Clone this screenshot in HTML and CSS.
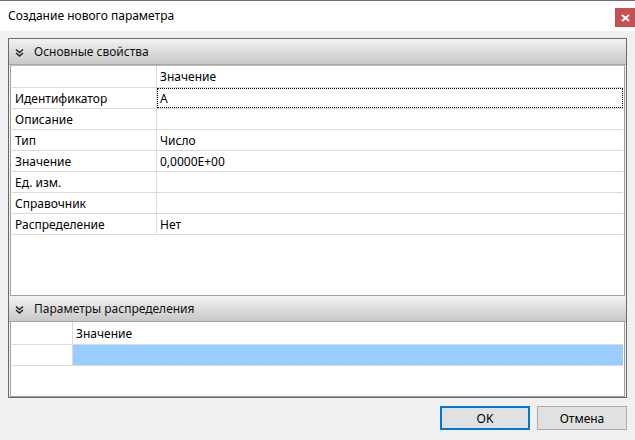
FILE: index.html
```html
<!DOCTYPE html>
<html>
<head>
<meta charset="utf-8">
<link rel="stylesheet" href="styles.css">
</head>
<body>
<div class="window">
  <div class="titlebar">
    <span class="title">Создание нового параметра</span>
    <div class="close">
      <svg width="9" height="8" viewBox="0 0 9 8"><path d="M1 1 L8 7 M8 1 L1 7" stroke="#fff" stroke-width="2" fill="none"/></svg>
    </div>
  </div>
  <div class="content">
    <div class="panel">
      <div class="section-head">
        <svg class="chev" width="9" height="9" viewBox="0 0 9 9"><path d="M1 1.5 L4.5 4.5 L8 1.5 M1 5 L4.5 8 L8 5" stroke="#222" stroke-width="1.5" fill="none"/></svg>
        <span>Основные свойства</span>
      </div>
      <div class="grid-wrap grow">
        <div class="grid g1">
          <div class="row head"><div class="c1"></div><div class="c2">Значение</div></div>
          <div class="row"><div class="c1">Идентификатор</div><div class="c2"><span class="focus">A</span></div></div>
          <div class="row"><div class="c1">Описание</div><div class="c2"></div></div>
          <div class="row"><div class="c1">Тип</div><div class="c2">Число</div></div>
          <div class="row"><div class="c1">Значение</div><div class="c2">0,0000E+00</div></div>
          <div class="row"><div class="c1">Ед. изм.</div><div class="c2"></div></div>
          <div class="row"><div class="c1">Справочник</div><div class="c2"></div></div>
          <div class="row"><div class="c1">Распределение</div><div class="c2">Нет</div></div>
        </div>
      </div>
      <div class="section-head second">
        <svg class="chev" width="9" height="9" viewBox="0 0 9 9"><path d="M1 1.5 L4.5 4.5 L8 1.5 M1 5 L4.5 8 L8 5" stroke="#222" stroke-width="1.5" fill="none"/></svg>
        <span>Параметры распределения</span>
      </div>
      <div class="grid-wrap g2wrap">
        <div class="grid g2">
          <div class="row head"><div class="c1"></div><div class="c2">Значение</div></div>
          <div class="row"><div class="c1"></div><div class="c2 sel"></div></div>
        </div>
      </div>
    </div>
    <div class="buttons">
      <button class="btn default">OK</button>
      <button class="btn">Отмена</button>
    </div>
  </div>
</div>
</body>
</html>
```

FILE: styles.css
```css
html, body {
  margin: 0;
  padding: 0;
}
body {
  width: 635px;
  height: 440px;
  background: #f0f0f0;
  font-family: "Noto Sans", "Open Sans", sans-serif;
  font-size: 12px;
  color: #000;
  overflow: hidden;
}
.window {
  display: flex;
  flex-direction: column;
  height: 440px;
}
.titlebar {
  height: 30px;
  background: #fff;
  border-top: 1px solid #707070;
  display: flex;
  align-items: flex-start;
  justify-content: space-between;
}
.title {
  margin: 7px 0 0 8px;
  line-height: 16px;
}
.close {
  width: 20px;
  height: 19px;
  margin-top: 7px;
  background: #c75050;
  display: flex;
  align-items: center;
  justify-content: center;
}
.content {
  flex: 1;
  display: flex;
  flex-direction: column;
  padding: 7px 8px 0 8px;
}
.panel {
  width: 617px;
  height: 358px;
  border: 1px solid #6a6a6a;
  display: flex;
  flex-direction: column;
}
.section-head {
  height: 25px;
  background: linear-gradient(#f2f2f2, #c8c8c8);
  border-bottom: 1px solid #a4a4a4;
  display: flex;
  align-items: center;
  padding-left: 6px;
  color: #111;
  flex-shrink: 0;
}
.section-head .chev {
  margin-right: 10px;
  margin-top: 1px;
}
.grid-wrap {
  padding: 0 1px 0 1px;
  display: flex;
}
.grow {
  height: 231px;
  flex-shrink: 0;
}
.g2wrap {
  flex: 1;
}
.grid {
  flex: 1;
  background: #fff;
  border: 1px solid #a0a0a0;
  border-top: 0;
  padding: 0 1px 0 1px;
}
.g1 {
  border-top: 1px solid #bdbdbd;
}
.row {
  display: flex;
  height: 20px;
  border-bottom: 1px solid #dadada;
}
.row.head {
  height: 21px;
}
.g2 .row.head {
  height: 22px;
}
.c1 {
  border-right: 1px solid #dadada;
  padding-left: 3px;
  line-height: 21px;
  box-sizing: border-box;
  width: 145px;
}
.c2 {
  flex: 1;
  line-height: 21px;
  padding-left: 3px;
}
.head .c1, .head .c2 {
  line-height: 22px;
}
.g2 .c1 {
  width: 61px;
}
.g2 .head .c2 {
  line-height: 24px;
}
.focus {
  display: block;
  border: 1px dotted #000;
  margin-left: -3px;
  padding-left: 2px;
  height: 18px;
  line-height: 19px;
}
.sel {
  background: #99ccff;
}
.buttons {
  display: flex;
  justify-content: flex-end;
  gap: 7px;
  margin-top: 8px;
}
.btn {
  width: 90px;
  height: 24px;
  font-family: "Noto Sans", "Open Sans", sans-serif;
  font-size: 12px;
  background: #e1e1e1;
  border: 1px solid #adadad;
  color: #000;
  padding: 0;
  margin: 0;
}
.btn.default {
  border: 2px solid #0078d7;
}
```
